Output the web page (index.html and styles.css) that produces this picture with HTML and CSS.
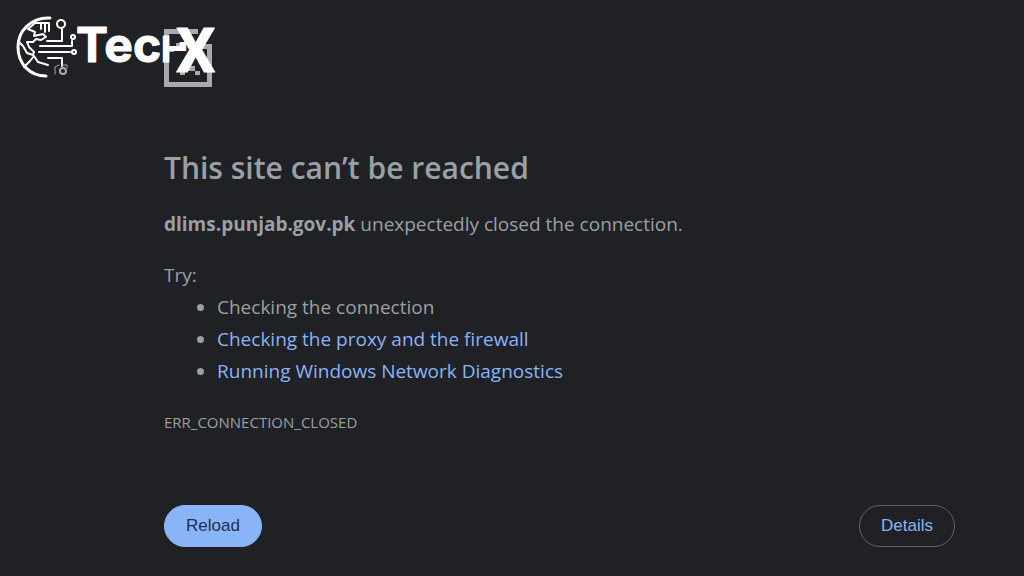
FILE: index.html
```
<!DOCTYPE html>
<html lang="en">
<head>
    <meta charset="UTF-8">
    <meta name="viewport" content="width=device-width, initial-scale=1.0">
    <title>dlims.punjab.gov.pk</title>
    <link rel="stylesheet" href="styles.css">
</head>
<body>
    <header>
        <svg class="logo" width="208" height="80" viewBox="10 10 208 80" role="img" aria-label="TecHX">
            <defs>
                <clipPath id="join">
                    <path d="M158 30H174V42H198V51H174V70H158Z"/>
                </clipPath>
            </defs>
            <!-- broken page icon -->
            <g fill="#a9aaab">
                <path d="M164 29H198V34H169V82H207V49H193V44H212V87H164Z"/>
                <path d="M176 43h5v5h-5zM185 66h10v5h-10zM180 71h5v4h-5zM195 71h5v4h-5z"/>
            </g>
            <!-- globe -->
            <g fill="none" stroke="#fff" stroke-width="2" stroke-linecap="round" stroke-linejoin="round">
                <path stroke-width="3" d="M50 18C31 17 18 31 18 47C18 64 30 76 46 76"/>
                <path d="M34 24L28 29L35 32L34 36L43 34L46 37L41 40L36 39L33 42L27 42L29 47L34 52L33 55L27 53L23 46L19 42"/>
                <path d="M24 67L30 61L34 56L38 62L48 65"/>
                <path d="M34 23H49V31M41 24V29M45 24V32"/>
                <!-- circuit lines -->
                <path d="M47 41H62V29M40 46H72V41M39 52H70M48 58H62V66"/>
                <circle cx="61" cy="24" r="4"/>
                <circle cx="73" cy="37" r="2"/>
                <circle cx="74" cy="52" r="2"/>
                <path stroke="#a9aaab" stroke-width="1" d="M55 74V67L59 65M62 65H67V68"/>
                <circle stroke="#a9aaab" cx="63" cy="71" r="3"/>
            </g>
            <g class="logo-text">
                <text x="76" y="62" font-size="48">Tec</text>
                <text x="161" y="62" font-size="36" clip-path="url(#join)">H</text>
                <text class="logo-x" x="176" y="72" font-size="62">X</text>
            </g>
        </svg>
    </header>
    <main>
        <h1>This site can’t be reached</h1>
        <p><strong>dlims.punjab.gov.pk</strong> unexpectedly closed the connection.</p>
        <div class="suggestions">
            <p>Try:</p>
            <ul>
                <li>Checking the connection</li>
                <li><a href="#proxy">Checking the proxy and the firewall</a></li>
                <li><a href="#diagnostics">Running Windows Network Diagnostics</a></li>
            </ul>
        </div>
        <div class="error-code">ERR_CONNECTION_CLOSED</div>
        <div class="buttons">
            <button class="reload" type="button">Reload</button>
            <button class="details" type="button">Details</button>
        </div>
    </main>
</body>
</html>
```
FILE: styles.css
```
* {
    box-sizing: border-box;
}
body {
    margin: 0;
    background: #202124;
    color: #9aa0a6;
    font-family: "Open Sans", "Noto Sans", sans-serif;
    font-size: 19px;
    line-height: 32px;
}
header {
    padding: 10px 10px 0;
}
.logo {
    display: block;
}
.logo-text {
    fill: #fff;
    stroke: #fff;
    stroke-width: 1;
    stroke-linejoin: round;
    font-family: Inter, sans-serif;
    font-weight: 700;
}
.logo-x {
    font-family: Roboto, sans-serif;
}
main {
    margin: 58px 69px 0 164px;
}
h1 {
    margin: 0 0 20px;
    font-size: 30px;
    font-weight: 600;
    line-height: 40px;
}
p {
    margin: 0;
}
.suggestions {
    margin-top: 19px;
}
ul {
    margin: 0;
    padding-left: 53px;
}
a {
    color: #8ab4f8;
    text-decoration: none;
}
.error-code {
    margin-top: 23px;
    font-size: 15px;
    line-height: 24px;
}
.buttons {
    display: flex;
    justify-content: space-between;
    align-items: flex-start;
    margin-top: 71px;
}
button {
    padding: 0 21px;
    border: 1px solid #8ab4f8;
    border-radius: 22px;
    font-family: "Liberation Sans", Arial, sans-serif;
    font-size: 17px;
    line-height: 40px;
    cursor: pointer;
}
.reload {
    background: #8ab4f8;
    color: #202f4b;
}
.details {
    border-color: #5f6368;
    background: transparent;
    color: #8ab4f8;
}
```
